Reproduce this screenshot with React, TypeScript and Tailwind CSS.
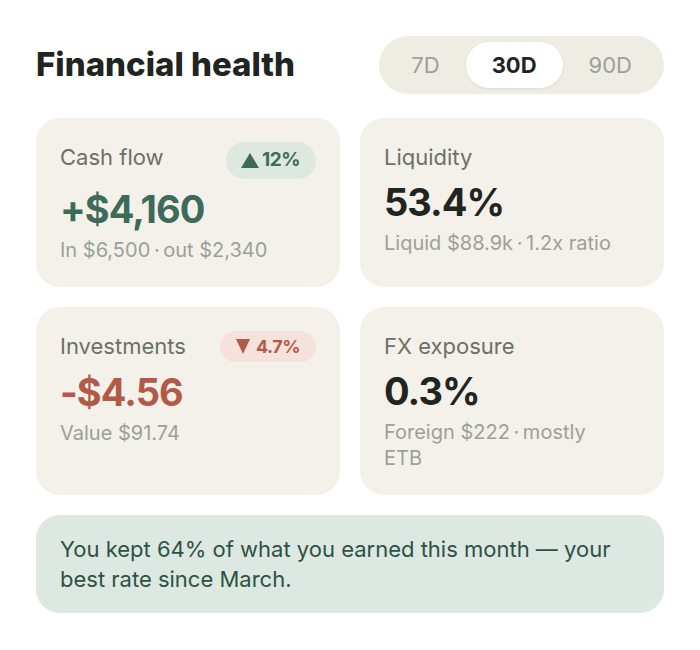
import React, { useState } from 'react'

type Trend = { dir: 'up' | 'down'; value: string }

type Metric = {
  label: string
  value: string
  tone: 'pos' | 'neg' | 'plain'
  detail: string
  trend?: Trend
}

const dot = '\u2009·\u2009'

const metrics: Metric[] = [
  { label: 'Cash flow', value: '+$4,160', tone: 'pos', detail: `In $6,500${dot}out $2,340`, trend: { dir: 'up', value: '12%' } },
  { label: 'Liquidity', value: '53.4%', tone: 'plain', detail: `Liquid $88.9k${dot}1.2x ratio` },
  { label: 'Investments', value: '-$4.56', tone: 'neg', detail: 'Value $91.74', trend: { dir: 'down', value: '4.7%' } },
  { label: 'FX exposure', value: '0.3%', tone: 'plain', detail: `Foreign $222${dot}mostly ETB` },
]

const ranges = ['7D', '30D', '90D']

const TrendBadge: React.FC<{ trend: Trend }> = ({ trend }) => {
  if (trend.dir === 'up') {
    return (
      <span className="flex h-[37px] items-center gap-[3px] rounded-full bg-[#dce8e0] pr-[16px] pl-[15px] text-[19px] font-bold tracking-tight text-[#3d6b59]">
        <svg width="18" height="15" viewBox="0 0 18 15" className="fill-current">
          <path d="M9 0 18 15H0Z" />
        </svg>
        {trend.value}
      </span>
    )
  }
  return (
    <span className="flex h-[31px] items-center gap-1.5 rounded-full bg-[#f6e2dc] px-4 text-[18px] font-bold tracking-tight text-[#b25a47]">
      <svg width="14" height="15" viewBox="0 0 14 15" className="fill-current">
        <path d="M0 0h14L7 15Z" />
      </svg>
      {trend.value}
    </span>
  )
}

const MetricCard: React.FC<{ m: Metric }> = ({ m }) => {
  const valueColor =
    m.tone === 'pos' ? 'text-[#3d6b59]' : m.tone === 'neg' ? 'text-[#b25a47]' : 'text-[#1f2520]'
  return (
    <div className="rounded-3xl bg-[#f4f1ea] px-6 pt-6 pb-6">
      <div className="flex items-start justify-between">
        <span className="text-[22px] leading-[30px] text-[#6b7068]">{m.label}</span>
        {m.trend && <TrendBadge trend={m.trend} />}
      </div>
      <div className={`mt-1.5 text-[38px] leading-[48px] font-bold tracking-tight ${valueColor}`}>{m.value}</div>
      <div className="mt-1 pr-5 text-[20px] leading-[26px] text-[#9ba196]">{m.detail}</div>
    </div>
  )
}

export default function App() {
  const [range, setRange] = useState('30D')

  return (
    <div className="min-h-screen bg-white p-9 font-['Inter',sans-serif]">
      <div className="w-[628px]">
        <div className="flex items-center justify-between">
          <h1 className="text-[33px] font-extrabold text-[#1f2520]">Financial health</h1>
          <div className="flex h-[58px] items-center rounded-full bg-[#efece4] p-1.5">
            {ranges.map((r) => (
              <button
                key={r}
                onClick={() => setRange(r)}
                className={`h-[46px] rounded-full px-[26px] text-[22px] ${
                  range === r
                    ? 'bg-white font-bold text-[#1f2520] shadow-[0_1px_3px_rgba(0,0,0,0.08)]'
                    : 'text-[#9ba196]'
                }`}
              >
                {r}
              </button>
            ))}
          </div>
        </div>

        <div className="mt-6 grid grid-cols-2 gap-5">
          {metrics.map((m) => (
            <MetricCard key={m.label} m={m} />
          ))}
        </div>

        <div className="mt-5 rounded-3xl bg-[#dce8e1] px-6 py-[19px] text-[22px] leading-[30px] text-[#2d5243]">
          You kept 64% of what you earned this month — your best rate since March.
        </div>
      </div>
    </div>
  )
}
